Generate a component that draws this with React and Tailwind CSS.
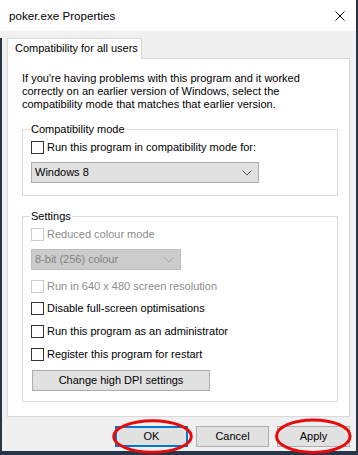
import React from 'react';

const FONT = { fontFamily: '"Liberation Sans", Arial, sans-serif' };

function Check({ label, disabled }) {
  return (
    <div className="flex h-[13px] items-center">
      <span
        className={
          disabled
            ? 'size-[13px] shrink-0 border border-[#cccccc] bg-white'
            : 'size-[13px] shrink-0 border border-[#333333] bg-white'
        }
      />
      <span className={disabled ? 'ml-[3px] text-[#8c8c8c]' : 'ml-[3px] text-black'}>{label}</span>
    </div>
  );
}

function Chevron({ color }) {
  return (
    <svg width="10" height="6" viewBox="0 0 10 6" className="shrink-0">
      <path d="M0.5 0.5 L5 5 L9.5 0.5" fill="none" stroke={color} strokeWidth="1" />
    </svg>
  );
}

function Button({ children, primary, className = '' }) {
  return (
    <div
      className={
        'flex h-[21px] items-center justify-center bg-[#e1e1e1] text-black ' +
        (primary ? 'border-2 border-[#0078d7] ' : 'border border-[#adadad] ') +
        className
      }
    >
      {children}
    </div>
  );
}

export default function App() {
  return (
    <div className="relative h-[455px] w-[358px] overflow-hidden bg-[#263648] text-[11px] leading-[13px]" style={FONT}>
      <div className="flex h-[451px] w-[356px] flex-col bg-[#f0f0f0]">
        {/* title bar */}
        <div className="flex h-[31px] shrink-0 items-center justify-between bg-white pl-[9px] pr-[11px]">
          <span className="text-[11.6px] text-black">poker.exe Properties</span>
          <svg width="10" height="10" viewBox="0 0 10 10">
            <path d="M0.5 0.5 L9.5 9.5 M9.5 0.5 L0.5 9.5" stroke="#000" strokeWidth="1" />
          </svg>
        </div>
        <div className="h-[7px] shrink-0" />

        <div className="flex flex-1 flex-col border-l-2 border-[#263648] pl-[5px]">
          {/* tab */}
          <div className="relative z-10 -mb-px flex h-[21px] w-[135px] items-center border border-b-0 border-[#d9d9d9] bg-white pl-[7px] pb-px">
            Compatibility for all users
          </div>

          {/* panel */}
          <div className="w-[343px] border border-[#d9d9d9] bg-white pl-[14px] pt-[13px] pb-[14px]">
            <p className="whitespace-nowrap text-black">
              If you're having problems with this program and it worked
              <br />
              correctly on an earlier version of Windows, select the
              <br />
              compatibility mode that matches that earlier version.
            </p>

            <fieldset className="mt-[12px] w-[316px] border border-[#dcdcdc] px-[8px] pb-[12px]">
              <legend className="-ml-px px-px">Compatibility mode</legend>
              <div className="mt-[5px]">
                <Check label="Run this program in compatibility mode for:" />
              </div>
              <div className="mt-[8px] flex h-[21px] w-[228px] items-center justify-between border border-[#adadad] bg-[#e1e1e1] pl-[3px] pr-[6px]">
                <span>Windows 8</span>
                <Chevron color="#555555" />
              </div>
            </fieldset>

            <fieldset className="mt-[14px] w-[316px] border border-[#dcdcdc] px-[8px] pb-[10px]">
              <legend className="-ml-px px-px">Settings</legend>
              <div className="mt-[5px]">
                <Check label="Reduced colour mode" disabled />
              </div>
              <div className="mt-[8px] flex h-[21px] w-[150px] items-center justify-between border border-[#bfbfbf] bg-[#cccccc] pl-[3px] pr-[6px] text-[#838383]">
                <span>8-bit (256) colour</span>
                <Chevron color="#a8a8a8" />
              </div>
              <div className="mt-[10px]">
                <Check label="Run in 640 x 480 screen resolution" disabled />
              </div>
              <div className="mt-[9px]">
                <Check label="Disable full-screen optimisations" />
              </div>
              <div className="mt-[10px]">
                <Check label="Run this program as an administrator" />
              </div>
              <div className="mt-[10px]">
                <Check label="Register this program for restart" />
              </div>
              <Button className="ml-px mt-[9px] w-[178px]">Change high DPI settings</Button>
            </fieldset>
          </div>

          {/* dialog buttons */}
          <div className="mt-[9px] flex w-[343px] justify-end gap-[8px]">
            <Button primary className="w-[73px]">OK</Button>
            <Button className="w-[73px]">Cancel</Button>
            <Button className="w-[73px]">Apply</Button>
          </div>
        </div>
      </div>

      {/* red annotation circles */}
      <svg className="pointer-events-none absolute left-0 top-0" width="358" height="455" viewBox="0 0 358 455">
        <ellipse cx="152.5" cy="436.5" rx="38.8" ry="15.8" fill="none" stroke="#e60a0a" strokeWidth="3" />
        <ellipse cx="313.3" cy="436.2" rx="36.8" ry="16.2" fill="none" stroke="#e60a0a" strokeWidth="3" />
      </svg>
    </div>
  );
}
